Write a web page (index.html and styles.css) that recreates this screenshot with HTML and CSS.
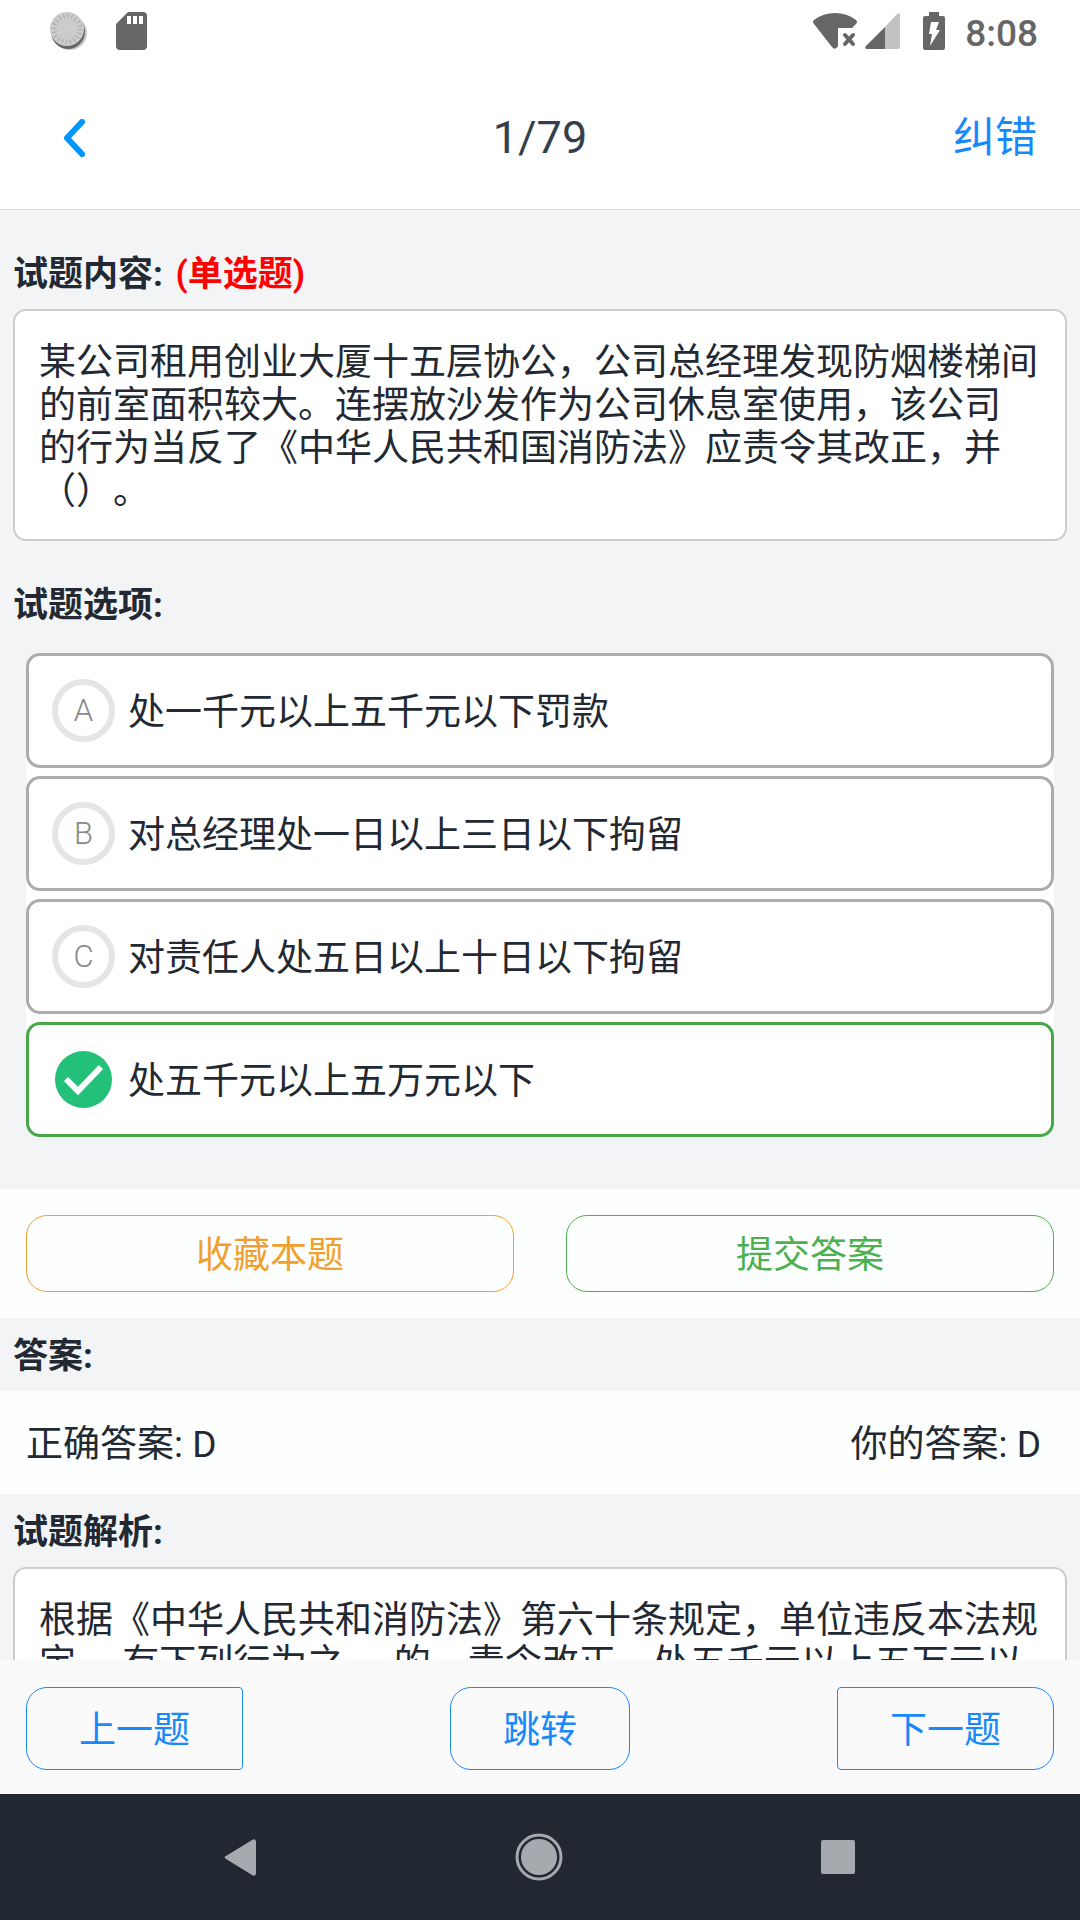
FILE: index.html
```html
<!DOCTYPE html>
<html lang="zh-CN">
<head>
<meta charset="utf-8">
<meta name="viewport" content="width=device-width, initial-scale=1">
<title>1/79</title>
<link rel="stylesheet" href="styles.css">
</head>
<body>
<div class="screen">
  <div class="status">
    <svg class="status-sync" width="38" height="38" viewBox="0 0 38 38" aria-hidden="true">
      <circle cx="20" cy="21" r="17" fill="#c9c9c9"/>
      <circle cx="18" cy="20" r="17" fill="#666"/>
      <circle cx="17" cy="17" r="17" fill="#ccc"/>
      <circle cx="17" cy="17" r="13" fill="none" stroke="#aaa" stroke-width="5" stroke-dasharray="1 3.084"/>
    </svg>
    <svg width="31" height="38" viewBox="0 0 31 38" aria-hidden="true">
      <path fill="#666" fill-rule="evenodd" d="M12 0H27Q31 0 31 4V34Q31 38 27 38H4Q0 38 0 34V12ZM11 4V12H15V4ZM17 4V12H21V4ZM23 4V12H27V4Z"/>
    </svg>
    <div class="status-right">
      <svg width="44" height="37" viewBox="0 0 44 37" aria-hidden="true">
        <path fill="#666" d="M1 7Q10 0 22 0T43 7Q45 9 43 11L39 15H25V33Q22 38 19 34L1 11Q-1 9 1 7Z"/>
        <path d="M32 22L40 31M40 22L32 31" stroke="#666" stroke-width="4" stroke-linecap="round"/>
      </svg>
      <svg class="status-signal" width="35" height="36" viewBox="0 0 35 36" aria-hidden="true">
        <path fill="#c2c2c2" d="M20 14L32 1Q35-1 35 2V34Q35 36 33 36H20Z"/>
        <path fill="#666" d="M20 14V36H2Q-1 36 1 33Z"/>
      </svg>
      <svg class="status-battery" width="22" height="38" viewBox="0 0 22 38" aria-hidden="true">
        <path fill="#666" d="M6 0H16V4H20Q22 4 22 6V36Q22 38 20 38H2Q0 38 0 36V6Q0 4 2 4H6Z"/>
        <path fill="#fff" d="M8 10H16L13 18H17L7 34L9 22H6Z"/>
      </svg>
      <span class="status-time">8:08</span>
    </div>
  </div>

  <header class="header">
    <button class="back" type="button" aria-label="返回">
      <svg width="22" height="38" viewBox="0 0 22 38" aria-hidden="true"><path d="M19 3L4 19L19 35" fill="none" stroke="#0096ff" stroke-width="6" stroke-linecap="round" stroke-linejoin="round"/></svg>
    </button>
    <h1 class="title">1/79</h1>
    <a class="report" href="#">纠错</a>
  </header>

  <main class="content">
    <section class="block">
      <h2 class="label">试题内容: <span class="kind">(单选题)</span></h2>
      <p class="card">某公司租用创业大厦十五层协公，公司总经理发现防烟楼梯间<br>的前室面积较大。连摆放沙发作为公司休息室使用，该公司<br>的行为当反了《中华人民共和国消防法》应责令其改正，并<br>（）。</p>
    </section>

    <section class="block">
      <h2 class="label">试题选项:</h2>
      <div class="options">
        <label class="option"><span class="mark"><input class="radio" type="radio" name="answer"><span class="letter">A</span></span><span class="choice">处一千元以上五千元以下罚款</span></label>
        <label class="option"><span class="mark"><input class="radio" type="radio" name="answer"><span class="letter">B</span></span><span class="choice">对总经理处一日以上三日以下拘留</span></label>
        <label class="option"><span class="mark"><input class="radio" type="radio" name="answer"><span class="letter">C</span></span><span class="choice">对责任人处五日以上十日以下拘留</span></label>
        <label class="option option-right"><span class="mark"><input class="radio" type="radio" name="answer" checked><svg class="tick" width="40" height="32" viewBox="0 0 40 32" aria-hidden="true"><path d="M2 15L14 27L37 3" fill="none" stroke="#fff" stroke-width="6"/></svg></span><span class="choice">处五千元以上五万元以下</span></label>
      </div>
    </section>

    <div class="actions">
      <button class="button button-save" type="button">收藏本题</button>
      <button class="button button-submit" type="button">提交答案</button>
    </div>

    <section>
      <h2 class="label">答案:</h2>
      <div class="answers"><span>正确答案: D</span><span>你的答案: D</span></div>
    </section>

    <section>
      <h2 class="label">试题解析:</h2>
      <p class="card">根据《中华人民共和消防法》第六十条规定，单位违反本法规<br>定， 有下列行为之一&#x2004;的，责令改正，处五千元以上五万元以</p>
    </section>
  </main>

  <footer class="pager">
    <button class="button button-page button-prev" type="button">上一题</button>
    <button class="button button-page button-jump" type="button">跳转</button>
    <button class="button button-page button-next" type="button">下一题</button>
  </footer>

  <nav class="system">
    <button class="key" type="button" aria-label="后退"><svg width="32" height="37" viewBox="0 0 32 37"><path d="M2 17L28 1Q32-1 32 3V34Q32 38 28 36L2 20Q-1 18 2 17Z" fill="#a6a9ad"/></svg></button>
    <button class="key" type="button" aria-label="主页"><svg width="50" height="50" viewBox="0 0 50 50"><circle cx="25" cy="25" r="22" fill="none" stroke="#a6a9ad" stroke-width="3"/><circle cx="25" cy="25" r="18" fill="#a6a9ad"/></svg></button>
    <button class="key" type="button" aria-label="最近任务"><svg width="34" height="34" viewBox="0 0 34 34"><rect width="34" height="34" rx="2" fill="#a6a9ad"/></svg></button>
  </nav>
</div>
</body>
</html>
```

FILE: styles.css
```css
* {
  box-sizing: border-box;
}

body {
  margin: 0;
  background: #f3f4f6;
  color: #222932;
  font-family: Roboto, "Noto Sans CJK SC", sans-serif;
  font-size: 37px;
  line-height: 43px;
  text-spacing-trim: space-all;
}

button {
  margin: 0;
  padding: 0;
  border: 0;
  background: none;
  color: inherit;
  font: inherit;
}

svg {
  display: block;
  flex: none;
}

.screen {
  display: flex;
  flex-direction: column;
  height: 100vh;
}

/* Status bar */

.status {
  display: flex;
  flex: none;
  align-items: center;
  height: 72px;
  padding: 0 42px 10px 50px;
  background: #fff;
  color: #666;
}

.status-sync {
  margin-right: 28px;
}

.status-right {
  display: flex;
  align-items: center;
  margin-left: auto;
}

.status-signal {
  margin-left: 8px;
}

.status-battery {
  margin: 0 20px 0 23px;
}

.status-time {
  padding-top: 4px;
  font-weight: 500;
}

/* Header */

.header {
  display: grid;
  flex: none;
  grid-template-columns: 1fr auto 1fr;
  align-items: center;
  height: 138px;
  padding: 0 43px 6px 63px;
  border-bottom: 1px solid #d9dde1;
  background: #fff;
}

.back {
  justify-self: start;
}

.title {
  margin: 0 20px 0 0;
  color: #353f4b;
  font-size: 45px;
  font-weight: 400;
}

.report {
  justify-self: end;
  color: #1989fa;
  font-size: 42px;
  text-decoration: none;
}

/* Question */

.content {
  flex: 1;
  min-height: 0;
  overflow-y: auto;
  scrollbar-width: none;
}

.block {
  padding-top: 26px;
}

.label {
  margin: 0;
  padding: 17px 13px 13px;
  font-size: 35px;
  font-weight: 700;
}

.kind {
  margin-left: 4px;
  color: #f00;
}

.card {
  margin: 0 13px;
  padding: 30px 24px 26px;
  border: 2px solid #ccc;
  border-radius: 13px;
  background: #fff;
}

.options {
  display: grid;
  gap: 8px;
  margin: 13px 26px 52px;
  background: linear-gradient(#fff, #fff) center / 100% calc(100% - 60px) no-repeat;
}

.option {
  display: flex;
  align-items: center;
  gap: 13px;
  height: 115px;
  padding: 0 23px;
  border: 3px solid #acacac;
  border-radius: 14px;
  background: #fff;
}

.option-right {
  border-color: #48a647;
}

.choice {
  padding-top: 4px;
}

.mark {
  display: grid;
  width: 63px;
  height: 63px;
  place-items: center;
}

.radio,
.letter,
.tick {
  grid-area: 1 / 1;
}

.radio {
  width: 63px;
  height: 63px;
  margin: 0;
  border: 6px solid #e5e5e5;
  border-radius: 50%;
  appearance: none;
}

.radio:checked {
  width: 57px;
  height: 57px;
  border: 0;
  background: #22c078;
}

.letter {
  color: #888;
  font-size: 31px;
  font-weight: 300;
}

/* Buttons */

.actions {
  display: grid;
  grid-template-columns: 1fr 1fr;
  gap: 52px;
  padding: 26px;
  background: #fdfffe;
}

.button {
  height: 77px;
  padding-top: 4px;
  border: 1px solid;
  border-radius: 21px;
}

.button-save {
  color: #f0a030;
}

.button-submit {
  color: #4caf50;
}

.answers {
  display: flex;
  justify-content: space-between;
  padding: 32px 39px 28px 26px;
  background: #fdfffe;
}

.pager {
  display: grid;
  flex: none;
  grid-template-columns: 217px 180px 217px;
  align-items: center;
  justify-content: space-between;
  height: 134px;
  padding: 2px 26px 0;
  background: #fafafa;
}

.button-page {
  height: 83px;
  color: #1989fa;
}

.button-prev {
  border-radius: 21px 4px 4px 21px;
}

.button-next {
  border-radius: 4px 21px 21px 4px;
}

/* System keys */

.system {
  display: grid;
  flex: none;
  grid-template-columns: repeat(3, 1fr);
  place-items: center;
  height: 126px;
  padding: 0 93px 0 91px;
  background: #212832;
}
```
